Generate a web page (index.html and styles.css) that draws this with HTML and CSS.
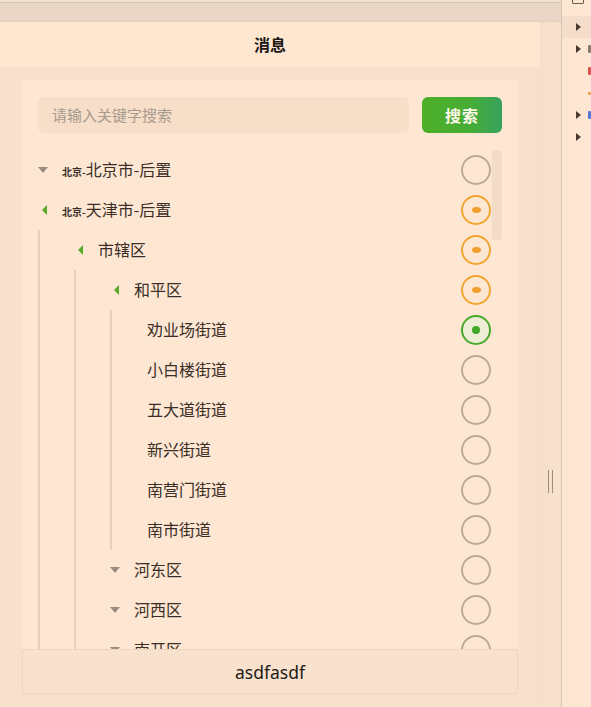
FILE: index.html
```html
<!DOCTYPE html>
<html lang="zh">
<head>
<meta charset="utf-8">
<title>消息</title>
<link rel="stylesheet" href="styles.css">
</head>
<body>
<div class="app">
  <div class="tabbar"><div class="tabline"></div><div class="tabfill"></div></div>
  <div class="main">
    <div class="page">
      <div class="header">消息</div>
      <div class="content">
        <div class="card">
          <div class="search">
            <div class="input">请输入关键字搜索</div>
            <div class="btn">搜索</div>
          </div>
          <div class="tree">
            <div class="thumb"></div>
            <div class="node">
              <div class="row"><span class="arrow"><i class="tri-down"></i></span><span class="label"><small>北京-</small>北京市-后置</span><span class="radio"></span></div>
            </div>
            <div class="node">
              <div class="row"><span class="arrow"><i class="tri-left"></i></span><span class="label"><small>北京-</small>天津市-后置</span><span class="radio half"><i></i></span></div>
              <div class="children">
                <div class="node">
                  <div class="row"><span class="arrow"><i class="tri-left"></i></span><span class="label">市辖区</span><span class="radio half"><i></i></span></div>
                  <div class="children">
                    <div class="node">
                      <div class="row"><span class="arrow"><i class="tri-left"></i></span><span class="label">和平区</span><span class="radio half"><i></i></span></div>
                      <div class="children">
                        <div class="row leaf"><span class="label">劝业场街道</span><span class="radio on"><i></i></span></div>
                        <div class="row leaf"><span class="label">小白楼街道</span><span class="radio"></span></div>
                        <div class="row leaf"><span class="label">五大道街道</span><span class="radio"></span></div>
                        <div class="row leaf"><span class="label">新兴街道</span><span class="radio"></span></div>
                        <div class="row leaf"><span class="label">南营门街道</span><span class="radio"></span></div>
                        <div class="row leaf"><span class="label">南市街道</span><span class="radio"></span></div>
                      </div>
                    </div>
                    <div class="row"><span class="arrow"><i class="tri-down"></i></span><span class="label">河东区</span><span class="radio"></span></div>
                    <div class="row"><span class="arrow"><i class="tri-down"></i></span><span class="label">河西区</span><span class="radio"></span></div>
                    <div class="row"><span class="arrow"><i class="tri-down"></i></span><span class="label">南开区</span><span class="radio"></span></div>
                  </div>
                </div>
              </div>
            </div>
          </div>
        </div>
        <div class="bar">asdfasdf</div>
      </div>
    </div>
    <div class="gutter"><div class="handle"></div></div>
  </div>
</div>
<div class="devtools">
  <div class="dt-icon"></div>
  <div class="dt-row sel"><i class="dt-tri"></i></div>
  <div class="dt-row"><i class="dt-tri"></i><b class="dt-c gray"></b></div>
  <div class="dt-row"><b class="dt-c red"></b></div>
  <div class="dt-row"><b class="dt-c orange"></b></div>
  <div class="dt-row"><i class="dt-tri"></i><b class="dt-c blue"></b></div>
  <div class="dt-row"><i class="dt-tri"></i></div>
</div>
</body>
</html>
```

FILE: styles.css
```css
* { box-sizing: border-box; }
html, body { margin: 0; padding: 0; }
body {
  width: 591px;
  height: 707px;
  overflow: hidden;
  display: flex;
  background: #f8e1cc;
  font-family: "Noto Sans CJK SC", "Noto Sans", sans-serif;
  color: #3b2f29;
}
.app {
  width: 561px;
  display: flex;
  flex-direction: column;
}
.tabbar { height: 22px; display: flex; flex-direction: column; }
.tabline { height: 3px; background: #f1dfd0; border-bottom: 1px solid #d9c4b3; }
.tabfill { flex: 1; background: #e9d6c6; border-bottom: 1px solid #e3cfbe; }
.main { flex: 1; display: flex; min-height: 0; }
.page { width: 540px; display: flex; flex-direction: column; background: #f8e1cc; }
.header {
  height: 45px;
  background: #fde7d1;
  display: flex;
  align-items: center;
  justify-content: center;
  font-weight: 700;
  font-size: 16px;
  color: #1c1714;
  padding-bottom: 1px;
}
.content {
  flex: 1;
  min-height: 0;
  display: flex;
  flex-direction: column;
  padding: 13px 22px 13px;
}
.card {
  flex: 1;
  min-height: 0;
  background: #fde7d3;
  padding: 17px 16px 0;
  display: flex;
  flex-direction: column;
  gap: 17px;
  overflow: hidden;
}
.search { display: flex; gap: 13px; height: 36px; flex-shrink: 0; }
.input {
  flex: 1;
  background: #f6dec8;
  border-radius: 6px;
  padding-left: 14px;
  padding-bottom: 1px;
  display: flex;
  align-items: center;
  font-size: 15px;
  color: #a89a8e;
}
.btn {
  width: 80px;
  border-radius: 6px;
  background: linear-gradient(90deg, #4daf27 0%, #46ad35 60%, #38a25e 100%);
  color: #fff8ea;
  font-weight: 700;
  font-size: 16px;
  display: flex;
  align-items: center;
  justify-content: center;
  letter-spacing: 1px;
  padding-bottom: 1px;
}
.tree {
  position: relative;
  flex: 1;
  min-height: 0;
  overflow: hidden;
  padding-right: 11px;
}
.thumb {
  position: absolute;
  right: 0;
  top: 0;
  width: 10px;
  height: 90px;
  border-radius: 4px;
  background: #f3dcc7;
}
.row {
  height: 40px;
  display: flex;
  align-items: center;
}
.arrow {
  width: 24px;
  flex-shrink: 0;
  display: flex;
  align-items: center;
}
.tri-down {
  width: 0; height: 0;
  border-left: 5.5px solid transparent;
  border-right: 5.5px solid transparent;
  border-top: 6px solid #9d8d81;
}
.tri-left {
  width: 0; height: 0;
  margin-left: 4px;
  border-top: 5px solid transparent;
  border-bottom: 5px solid transparent;
  border-right: 5px solid #58a92a;
}
.label { font-size: 16px; color: #3a2e27; white-space: nowrap; padding-bottom: 2px; }
.label small { font-size: 10px; font-weight: 700; }
.leaf .label { margin-left: 1px; }
.radio {
  margin-left: auto;
  width: 30px;
  height: 30px;
  border-radius: 50%;
  border: 2px solid #bda996;
  display: flex;
  align-items: center;
  justify-content: center;
  flex-shrink: 0;
}
.radio.half { border-color: #f0a630; }
.radio.half i { width: 9px; height: 6px; border-radius: 50%; background: #f0a02a; }
.radio.on { border-color: #4aa92c; background: #eeeed6; }
.radio.on i { width: 8px; height: 8px; border-radius: 50%; background: #3fa826; }
.children {
  border-left: 2px solid #e6cfba;
  padding-left: 34px;
}
.bar {
  height: 45px;
  flex-shrink: 0;
  background: #f8e2cd;
  border: 1px solid #edd5bf;
  border-radius: 4px;
  display: flex;
  align-items: center;
  justify-content: center;
  font-family: "Noto Sans", sans-serif;
  font-size: 17.5px;
  color: #1e1a17;
}
.gutter {
  width: 21px;
  background: linear-gradient(90deg, #f6dfca, #f8e2ce);
  display: flex;
  flex-direction: column;
  align-items: center;
  padding-top: 448px;
}
.handle {
  width: 5px;
  height: 23px;
  border-left: 1.5px solid #9e8f84;
  border-right: 1.5px solid #9e8f84;
  margin-left: -1px;
}
.devtools {
  width: 30px;
  background: #fde6d2;
  border-left: 1px solid #d8c4b2;
  display: flex;
  flex-direction: column;
  position: relative;
  padding-top: 16px;
}
.dt-icon {
  position: absolute;
  left: 10px;
  top: -3px;
  width: 12px;
  height: 7px;
  border: 1.5px solid #6c5d52;
  border-radius: 1px;
}
.dt-row {
  position: relative;
  height: 22px;
  display: flex;
  align-items: center;
  padding-left: 14px;
}
.dt-row.sel { background: #f4ddcb; }
.dt-tri {
  width: 0; height: 0;
  border-top: 4px solid transparent;
  border-bottom: 4px solid transparent;
  border-left: 5px solid #4b3c32;
}
.dt-c { position: absolute; right: 0; width: 3px; height: 8px; border-radius: 1px; }
.dt-c.gray { background: #8a7b70; }
.dt-c.red { background: #e05050; }
.dt-c.orange { background: #f0a050; height: 3px; }
.dt-c.blue { background: #5a78d8; }
```
